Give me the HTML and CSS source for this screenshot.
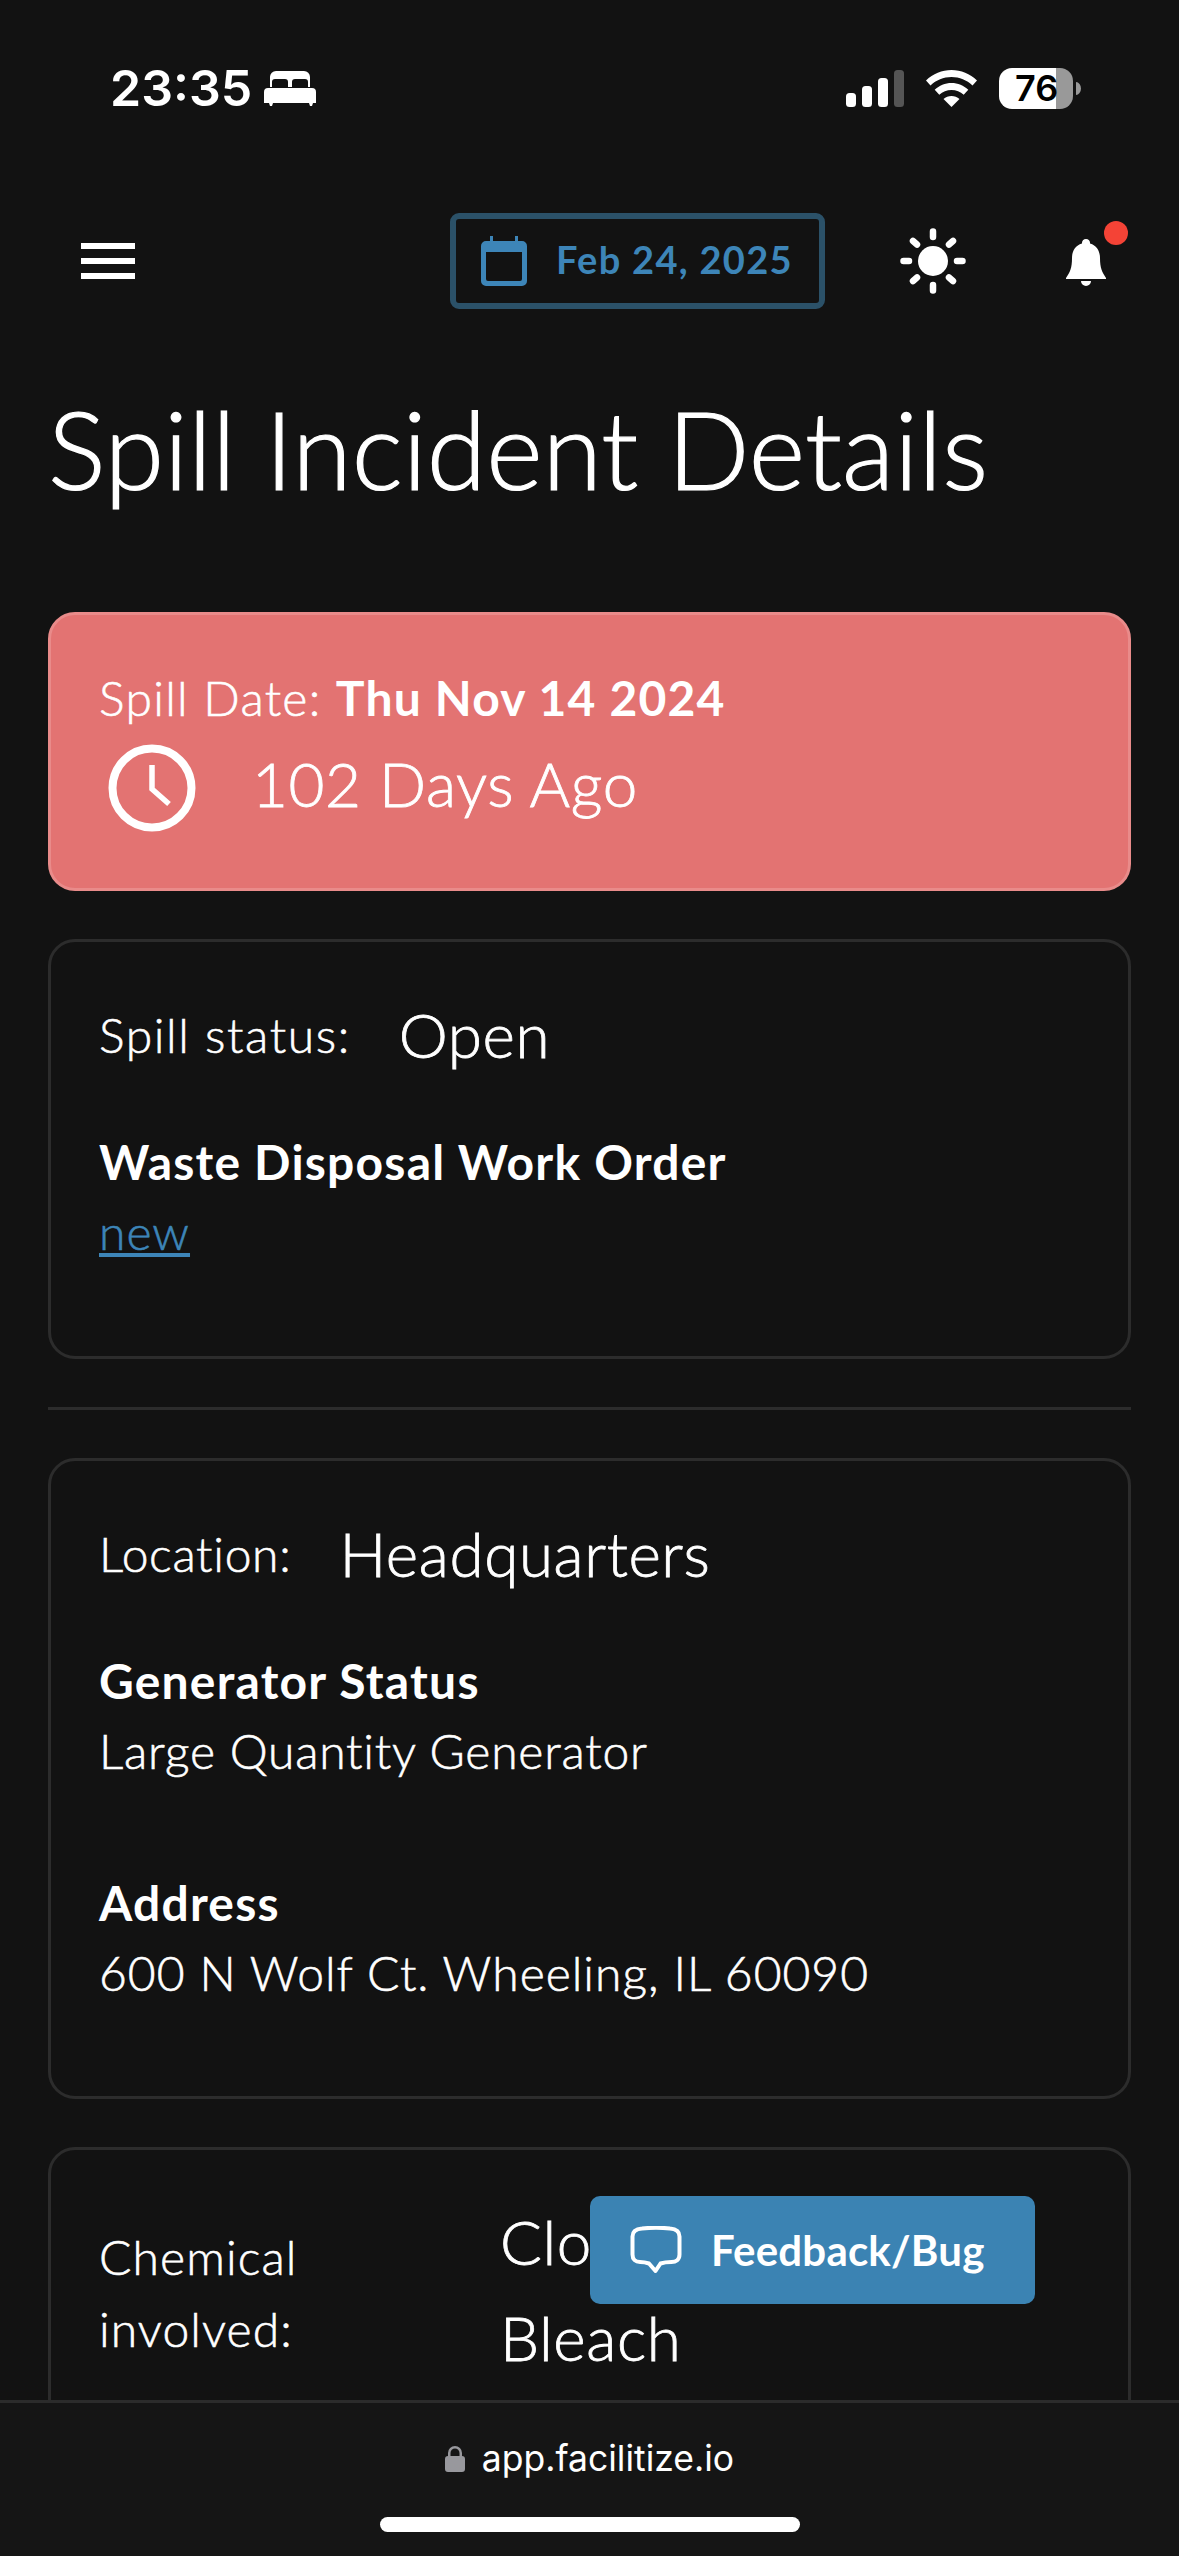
FILE: index.html
```html
<!DOCTYPE html>
<html lang="en">
<head>
<meta charset="utf-8">
<title>Spill Incident Details</title>
<link rel="stylesheet" href="styles.css">
</head>
<body>
<div class="screen">
  <div class="status">
    <div class="status-left">
      <span class="time">23:35</span>
      <svg class="bed" viewBox="0 0 52 35"><path fill="#fff" d="M6 16V6a6 6 0 0 1 6-6h28a6 6 0 0 1 6 6v10h-2V11a3 3 0 0 0-3-3H31a3 3 0 0 0-3 3v5h-4v-5a3 3 0 0 0-3-3H11a3 3 0 0 0-3 3v5zM4 17h44a4 4 0 0 1 4 4v11h-3l-1 3h-2l-1-3H9l-1 3H6l-1-3H0V21a4 4 0 0 1 4-4z"/></svg>
    </div>
    <div class="status-right">
      <svg class="signal" viewBox="0 0 58 37"><rect y="23" width="10" height="14" rx="3.5" fill="#fff"/><rect x="16" y="16" width="10" height="21" rx="3.5" fill="#fff"/><rect x="32" y="8" width="10" height="29" rx="3.5" fill="#fff"/><rect x="48" width="10" height="37" rx="3.5" fill="#555"/></svg>
      <svg class="wifi" viewBox="0 0 51 37"><path fill="#fff" d="M25.500 0C35 0 44 3.800 51 10.500l-4.500 5C40.800 10 33.500 7 25.500 7S10.200 10 4.500 15.500L0 10.500C7 3.800 16 0 25.500 0zM25.500 13c6.300 0 12.300 2.500 16.800 6.800l-4.600 5C34.400 21.700 30.100 20 25.500 20s-8.900 1.700-12.200 4.800l-4.600-5C13.200 15.500 19.200 13 25.500 13zM25.500 26c3 0 5.800 1.100 8 3.100L25.500 37l-8-7.900c2.200-2 5-3.100 8-3.100z"/></svg>
      <div class="battery">
        <div class="battery-body"><span class="battery-level">76</span></div>
        <svg class="battery-tip" viewBox="0 0 5 13"><path fill="#999" d="M0 0a5 6.500 0 0 1 5 6.500A5 6.500 0 0 1 0 13z"/></svg>
      </div>
    </div>
  </div>

  <header class="topbar">
    <div class="burger"><span></span><span></span><span></span></div>
    <div class="date-btn">
      <svg class="cal" viewBox="0 0 46 50"><path fill="#3d85b8" d="M9 0h3v5h22V0h3v5h4a5 5 0 0 1 5 5v35a5 5 0 0 1-5 5H5a5 5 0 0 1-5-5V10a5 5 0 0 1 5-5h4zM5 16v27a2 2 0 0 0 2 2h32a2 2 0 0 0 2-2V16z"/></svg>
      <span class="date-text">Feb 24, 2025</span>
    </div>
    <svg class="sun" viewBox="0 0 66 66"><circle cx="33" cy="33" r="15" fill="#fff"/><g stroke="#fff" stroke-width="6.500" stroke-linecap="round"><path d="M33 3.500v5.500M33 57v5.500M3.500 33H9M57 33h5.500M13 13l4 3.500M53 13l-4 3.500M13 53l4-3.500M53 53l-4-3.500"/></g></svg>
    <div class="bell-wrap">
      <svg class="bell" viewBox="0 0 40 49"><path fill="#fff" d="M20 0a4 4 0 0 1 4 4.500c7 2 10 8 10 14.500 0 10 2 14 6 20v1H0v-1c4-6 6-10 6-20C6 12.500 9 6.500 16 4.500A4 4 0 0 1 20 0zM15 42h10a5 5 0 0 1-10 0z"/></svg>
      <span class="dot"></span>
    </div>
  </header>

  <main class="content">
    <h1 class="title">Spill Incident Details</h1>

    <section class="alert">
      <div class="alert-date">Spill Date: <strong>Thu Nov 14 2024</strong></div>
      <div class="alert-row">
        <svg class="clock" viewBox="0 0 88 88"><circle cx="44" cy="44" r="39.500" fill="none" stroke="#fff" stroke-width="8"/><path d="M44 21v24l17 15" fill="none" stroke="#fff" stroke-width="5.500"/></svg>
        <span class="alert-ago">102 Days Ago</span>
      </div>
    </section>

    <section class="card card-status">
      <div class="pair pair-status"><span class="label">Spill status:</span><span class="value">Open</span></div>
      <div class="field">
        <div class="field-title">Waste Disposal Work Order</div>
        <a class="link" href="#">new</a>
      </div>
    </section>

    <hr class="rule">

    <section class="card card-location">
      <div class="pair"><span class="label">Location:</span><span class="value">Headquarters</span></div>
      <div class="field">
        <div class="field-title">Generator Status</div>
        <div class="field-text">Large Quantity Generator</div>
      </div>
      <div class="field field-gap">
        <div class="field-title">Address</div>
        <div class="field-text field-address">600 N Wolf Ct. Wheeling, IL 60090</div>
      </div>
    </section>

    <section class="card card-chem">
      <div class="chem-label">Chemical involved:</div>
      <div class="chem-value">Clorox Bleach</div>
    </section>
  </main>

  <button class="feedback">
    <svg class="bubble" viewBox="0 0 52 48"><path fill="none" stroke="#fff" stroke-width="4" stroke-linejoin="round" d="M12 2.500c9-1 19-1 28 0 6 .5 9.500 3 9.500 8v18c0 5-3.500 7.500-8 7.500-4 0-8 .5-11 1.500L25.500 45 19 37.500C16 36.500 13 36 10 36c-4.500 0-7.500-2.500-7.500-7.500v-18c0-5 3.500-7.500 9.500-8z"/></svg>
    <span>Feedback/Bug</span>
  </button>

  <footer class="urlbar">
    <div class="url">
      <svg class="lock" viewBox="0 0 20 27"><path fill="#98989d" d="M3 11V8a7 7 0 0 1 14 0v3h-2.500V8a4.500 4.500 0 0 0-9 0v3zM3 11h14a3 3 0 0 1 3 3v10a3 3 0 0 1-3 3H3a3 3 0 0 1-3-3V14a3 3 0 0 1 3-3z"/></svg>
      <span>app.facilitize.io</span>
    </div>
    <div class="home"></div>
  </footer>
</div>
</body>
</html>
```

FILE: styles.css
```css
* { box-sizing: border-box; }
html, body { margin: 0; padding: 0; background: #121212; }
.screen {
  position: relative;
  width: 1179px;
  height: 2556px;
  overflow: hidden;
  background: #121212;
  color: #fff;
  font-family: "Lato", "Noto Sans", sans-serif;
  font-weight: 400;
}
.status {
  display: flex;
  justify-content: space-between;
  align-items: center;
  height: 176px;
  padding: 0 98px 0 110px;
}
.status-left { display: flex; align-items: center; gap: 12px; }
.time {
  font-family: "Inter", sans-serif;
  font-weight: 600;
  font-size: 50px;
  line-height: 60px;
}
.bed { width: 52px; height: 35px; }
.status-right { display: flex; align-items: center; }
.signal { width: 58px; height: 37px; margin-right: 22px; }
.wifi { width: 51px; height: 37px; margin-right: 22px; }
.battery { display: flex; align-items: center; gap: 3px; }
.battery-body {
  width: 74px;
  height: 41px;
  border-radius: 13px;
  background: linear-gradient(90deg, #fff 0, #fff 57px, #999 57px);
  color: #000;
  font-family: "Inter", sans-serif;
  font-weight: 600;
  font-size: 36px;
  line-height: 41px;
  padding-left: 16px;
}
.battery-tip { width: 5px; height: 13px; }
.topbar {
  display: flex;
  align-items: center;
  height: 96px;
  margin-top: 37px;
  padding-left: 81px;
}
.burger { display: flex; flex-direction: column; gap: 9px; width: 54px; }
.burger span { display: block; height: 6px; background: #fff; }
.date-btn {
  display: flex;
  align-items: center;
  gap: 29px;
  width: 375px;
  height: 96px;
  margin-left: 315px;
  padding-left: 25px;
  border: 6px solid #2b5168;
  border-radius: 9px;
}
.cal { width: 46px; height: 50px; flex: none; }
.date-text {
  color: #3d85b8;
  font-weight: 700;
  font-size: 38px;
  letter-spacing: 1.3px;
  padding-bottom: 4px;
}
.sun { width: 66px; height: 66px; margin-left: 75px; }
.bell-wrap { position: relative; width: 40px; height: 49px; margin-left: 100px; margin-top: 4px; }
.bell { display: block; width: 40px; height: 49px; }
.dot {
  position: absolute;
  left: 38px;
  top: -18px;
  width: 24px;
  height: 24px;
  border-radius: 50%;
  background: #f44336;
}
.content { padding: 0 48px; }
.title, .alert-date, .alert-ago, .label, .value, .field-text, .link, .chem-label, .chem-value {
  font-weight: 300;
  -webkit-text-stroke: .6px currentColor;
}
.title {
  margin: 78px 0 103px 0;
  font-size: 108px;
  line-height: 122px;
  -webkit-text-stroke-width: 1.2px;
}
.alert {
  height: 279px;
  padding: 50px 48px 0;
  background: #e37372;
  border: 3px solid #e98b8a;
  border-radius: 27px;
}
.alert-date { font-size: 48px; line-height: 66px; letter-spacing: 1.3px; }
.alert-date strong { font-weight: 700; letter-spacing: 1.2px; -webkit-text-stroke: 0; }
.alert-row { display: flex; align-items: center; gap: 56px; margin-left: 9px; margin-top: 13px; }
.clock { width: 88px; height: 88px; flex: none; }
.alert-ago { font-size: 62px; line-height: 78px; padding-bottom: 10px; letter-spacing: .6px; -webkit-text-stroke-width: .8px; }
.card {
  margin-top: 48px;
  padding: 47px 48px 0;
  border: 3px solid #2c2c2c;
  border-radius: 27px;
  background: #121212;
}
.card-status { height: 420px; }
.card-location { height: 641px; }
.card-chem { display: flex; height: 400px; padding-top: 47px; }
.pair { display: flex; align-items: center; gap: 48px; height: 90px; }
.label { font-size: 48px; letter-spacing: .7px; }
.pair-status .label { letter-spacing: 1.6px; }
.value { font-size: 62px; letter-spacing: .6px; -webkit-text-stroke-width: .8px; }
.field { margin-top: 48px; }
.field-gap { margin-top: 82px; }
.field-title { font-size: 48px; line-height: 70px; font-weight: 700; letter-spacing: 1.2px; }
.field-text { font-size: 48px; line-height: 70px; letter-spacing: .8px; }
.field-address { letter-spacing: 1px; }
.link { font-size: 48px; line-height: 70px; color: #3d85b8; text-decoration: underline; letter-spacing: 1px; }
.rule { height: 3px; margin: 48px 0 0; border: 0; background: #2c2c2c; }
.chem-label { width: 401px; font-size: 48px; line-height: 72px; padding-top: 24px; padding-right: 140px; flex: none; letter-spacing: 1.1px; }
.chem-value { margin-top: -4px; font-size: 62px; line-height: 96px; width: 300px; letter-spacing: .6px; -webkit-text-stroke-width: .8px; }
.feedback {
  position: absolute;
  left: 590px;
  top: 2196px;
  display: flex;
  align-items: center;
  gap: 29px;
  width: 445px;
  height: 108px;
  padding: 0 0 0 40px;
  border: 0;
  border-radius: 10px;
  background: #3b83b3;
  color: #fff;
  font-family: "Lato", sans-serif;
  font-weight: 700;
  font-size: 42px;
  letter-spacing: .2px;
}
.bubble { width: 52px; height: 48px; flex: none; }
.urlbar {
  position: absolute;
  left: 0;
  right: 0;
  bottom: 0;
  height: 156px;
  display: flex;
  flex-direction: column;
  align-items: center;
  padding-top: 30px;
  background: #151515;
  border-top: 3px solid #2b2b2b;
}
.url {
  display: flex;
  align-items: center;
  gap: 17px;
  height: 50px;
  font-family: "Inter", sans-serif;
  font-weight: 400;
  font-size: 35.500px;
}
.lock { width: 20px; height: 27px; }
.home { width: 420px; height: 15px; margin-top: 34px; border-radius: 8px; background: #fff; }
```
